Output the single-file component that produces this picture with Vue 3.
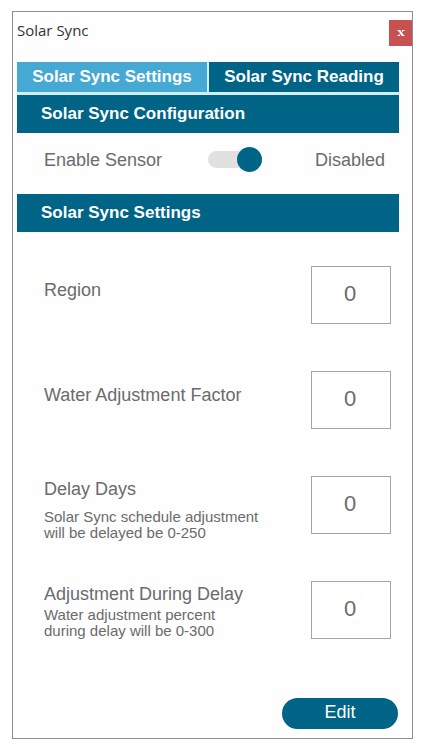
<template>
  <div class="page">
    <section class="dialog" aria-labelledby="dialog-title">
      <header class="title-bar">
        <h1 id="dialog-title" class="title">Solar Sync</h1>
        <button type="button" class="close" aria-label="Close">
          <svg width="8" height="8" viewBox="0 0 8 8" aria-hidden="true">
            <path class="stem" d="M2 1.5l4 5" />
            <path d="M6 1.5l-4 5M0.5 1.5h3M5 1.5h2.5M0.5 6.5h2.5M4.5 6.5h3" />
          </svg>
        </button>
      </header>

      <nav class="tabs">
        <button
          v-for="tab in tabs"
          :key="tab"
          type="button"
          class="tab"
          :class="{ active: tab === activeTab }"
          @click="activeTab = tab"
        >
          {{ tab }}
        </button>
      </nav>

      <h2 class="section-title">Solar Sync Configuration</h2>
      <div class="sensor">
        <label for="sensor">Enable Sensor</label>
        <input id="sensor" v-model="sensorOn" type="checkbox" class="switch" />
        <span class="status">Disabled</span>
      </div>

      <h2 class="section-title">Solar Sync Settings</h2>
      <form class="settings" @submit.prevent>
        <div v-for="field in fields" :key="field.id" class="field" :class="{ detailed: field.hint }">
          <div class="field-text">
            <label :for="field.id">{{ field.label }}</label>
            <p v-if="field.hint" class="hint" :class="{ spaced: field.spaced }">
              <span v-for="line in field.hint" :key="line">{{ line }}</span>
            </p>
          </div>
          <input :id="field.id" v-model="field.value" type="text" inputmode="numeric" class="value" />
        </div>
        <button type="submit" class="edit">Edit</button>
      </form>
    </section>
  </div>
</template>

<script setup>
import { ref } from 'vue'

const tabs = ['Solar Sync Settings', 'Solar Sync Reading']
const activeTab = ref(tabs[0])
const sensorOn = ref(true)

const fields = ref([
  { id: 'region', label: 'Region', value: '0' },
  { id: 'factor', label: 'Water Adjustment Factor', value: '0' },
  {
    id: 'delay-days',
    label: 'Delay Days',
    hint: ['Solar Sync schedule adjustment', 'will be delayed be 0-250'],
    spaced: true,
    value: '0'
  },
  {
    id: 'delay-adjustment',
    label: 'Adjustment During Delay',
    hint: ['Water adjustment percent', 'during delay will be 0-300'],
    value: '0'
  }
])
</script>

<style>
body {
  background: #fff;
}
</style>

<style scoped>
.page {
  padding: 11px 11px 7px 12px;
  font-family: 'Liberation Sans', Arial, sans-serif;
  font-size: 18px;
  line-height: 20px;
  color: #6b6b6b;
}

.page * {
  box-sizing: border-box;
}

button,
input {
  font: inherit;
  margin: 0;
}

button {
  border: 0;
  padding: 0;
  cursor: pointer;
}

.dialog {
  border: 1px solid #8e8e90;
  background: #fefefe;
}

.title-bar {
  display: flex;
  justify-content: space-between;
  align-items: flex-start;
  height: 50px;
  padding: 8px 0 0 4px;
}

.title {
  margin: 0;
  font-family: 'Open Sans', 'Noto Sans', sans-serif;
  font-size: 15px;
  font-weight: 400;
  line-height: 20px;
  color: #333;
}

.close {
  display: flex;
  align-items: center;
  justify-content: center;
  width: 23px;
  height: 26px;
  background: #c75050;
}

.close path {
  fill: none;
  stroke: #fff;
  stroke-width: 1;
}

.close .stem {
  stroke-width: 2;
}

.tabs {
  display: grid;
  grid-template-columns: 1fr 1fr;
  gap: 2px;
  margin: 0 13px 0 4px;
  padding-bottom: 3px;
  background: #d3eef8;
}

.tab {
  height: 30px;
  background: #006487;
  color: #fff;
  font-weight: 700;
  font-size: 17px;
  white-space: nowrap;
}

.tab.active {
  background: #45a9d3;
}

.section-title {
  margin: 0 13px 0 4px;
  padding: 9px 24px;
  background: #006487;
  color: #fff;
  font-size: 17px;
  line-height: 20px;
}

.sensor {
  display: grid;
  grid-template-columns: auto auto 1fr;
  column-gap: 46px;
  align-items: center;
  height: 61px;
  padding: 0 27px 8px 31px;
}

.status {
  text-align: right;
}

.switch {
  display: flex;
  align-items: center;
  appearance: none;
  width: 54px;
  height: 17px;
  background: #e3e1e0;
  border-radius: 9px;
}

/* the knob is taller than its track */
.switch::before {
  content: '';
  flex: none;
  width: 25px;
  height: 25px;
  border-radius: 50%;
  background: #006487;
}

.switch:checked {
  justify-content: flex-end;
}

.settings {
  display: flex;
  flex-direction: column;
  padding: 34px 14px 9px 31px;
}

.field {
  display: flex;
  justify-content: space-between;
  align-items: flex-start;
  min-height: 105px;
  padding-right: 7px;
}

.field-text {
  padding-top: 14px;
}

.detailed .field-text {
  padding-top: 3px;
}

.hint {
  margin: 3px 0 0;
  font-size: 15px;
  line-height: 16px;
}

.hint.spaced {
  margin-top: 10px;
}

.hint span {
  display: block;
}

.value {
  width: 80px;
  height: 58px;
  border: 1px solid #a5a5a5;
  border-radius: 0;
  padding: 0 2px 2px 0;
  background: #fff;
  color: #6b6b6b;
  font-size: 22px;
  text-align: center;
}

.edit {
  align-self: flex-end;
  width: 116px;
  height: 31px;
  margin-top: 12px;
  padding-bottom: 3px;
  border-radius: 16px;
  background: #006487;
  color: #fff;
}
</style>
